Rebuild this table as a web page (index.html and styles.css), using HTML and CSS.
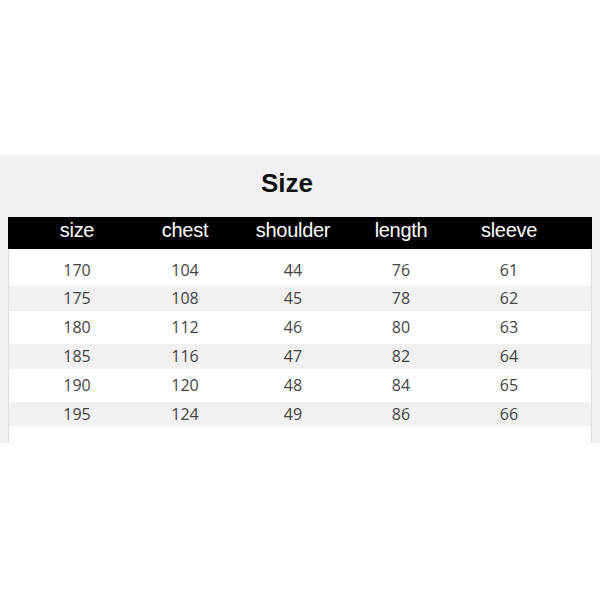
FILE: index.html
```html
<!DOCTYPE html>
<html>
<head>
<meta charset="utf-8">
<link rel="stylesheet" href="styles.css">
</head>
<body>
<div class="band">
  <h1 class="title">Size</h1>
  <div class="sheet">
    <div class="head cols">
      <span>size</span><span>chest</span><span>shoulder</span><span>length</span><span>sleeve</span>
    </div>
    <div class="body">
      <div class="row cols"><span>170</span><span>104</span><span>44</span><span>76</span><span>61</span></div>
      <div class="row cols alt"><span>175</span><span>108</span><span>45</span><span>78</span><span>62</span></div>
      <div class="row cols"><span>180</span><span>112</span><span>46</span><span>80</span><span>63</span></div>
      <div class="row cols alt"><span>185</span><span>116</span><span>47</span><span>82</span><span>64</span></div>
      <div class="row cols"><span>190</span><span>120</span><span>48</span><span>84</span><span>65</span></div>
      <div class="row cols alt"><span>195</span><span>124</span><span>49</span><span>86</span><span>66</span></div>
    </div>
  </div>
</div>
</body>
</html>
```
FILE: styles.css
```css
html, body {
  margin: 0;
  padding: 0;
  background: #ffffff;
}
body {
  font-family: "Liberation Sans", Arial, sans-serif;
}
.band {
  margin-top: 155px;
  background: #f1f1f3;
  padding: 12px 0 0 0;
}
.title {
  margin: 0;
  font-size: 26px;
  line-height: 30px;
  font-weight: bold;
  color: #111;
  text-align: center;
  padding-right: 26px;
  padding-top: 1px;
}
.sheet {
  margin: 19px 8px 0 8px;
}
.cols {
  display: grid;
  grid-template-columns: repeat(5, 1fr);
  padding: 0 29px 0 15px;
  text-align: center;
}
.head {
  background: #000;
  color: #fff;
  height: 26px;
  line-height: 26px;
  padding-bottom: 6px;
  font-size: 20px;
  letter-spacing: -0.3px;
}
.body {
  background: #fff;
  border-left: 1px solid #dedede;
  border-right: 1px solid #dedede;
  padding: 6.6px 0 14.6px 0;
}
.body .cols {
  padding-left: 14px;
  padding-right: 28px;
}
.row {
  height: 24.8px;
  line-height: 24.8px;
  border-top: 2px solid transparent;
  border-bottom: 2px solid transparent;
  background-clip: padding-box;
  font-family: "Open Sans", sans-serif;
  font-size: 16px;
  color: #444;
}
.row.alt {
  background-color: #f1f1f1;
}
```
